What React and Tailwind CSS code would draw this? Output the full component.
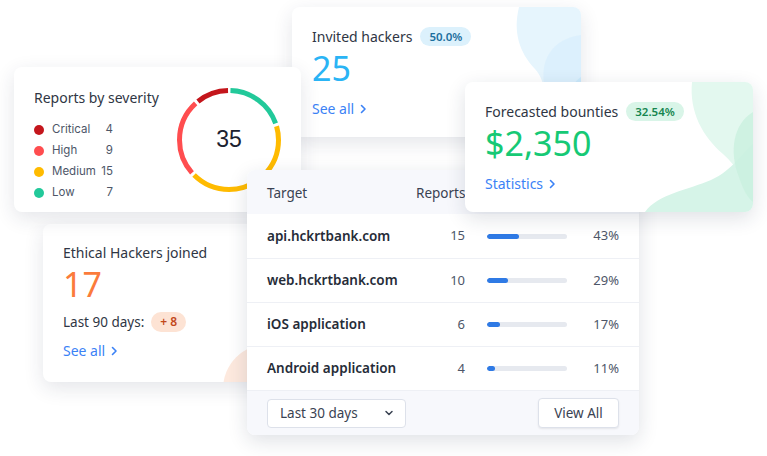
import React from "react";

const severity = [
  { label: "Critical", count: 4, color: "#c4161c" },
  { label: "High", count: 9, color: "#ff4d4f" },
  { label: "Medium", count: 15, color: "#ffbb00" },
  { label: "Low", count: 7, color: "#22c99a" },
];

const targets = [
  { name: "api.hckrtbank.com", reports: 15, pct: 43 },
  { name: "web.hckrtbank.com", reports: 10, pct: 29 },
  { name: "iOS application", reports: 6, pct: 17 },
  { name: "Android application", reports: 4, pct: 11 },
];

const Chevron = ({ className }) => (
  <svg viewBox="0 0 10 10" className={className} fill="none" stroke="currentColor" strokeWidth="1.6" strokeLinecap="round" strokeLinejoin="round">
    <path d="M3.5 1.5 7 5 3.5 8.5" />
  </svg>
);

const Donut = () => {
  const r = 49.5;
  const c = 2 * Math.PI * r;
  const gap = 3;
  // clockwise from the top: low, medium, high, critical
  const order = [severity[3], severity[2], severity[1], severity[0]];
  let start = 0;
  return (
    <div className="relative w-[106px] h-[106px]">
      <svg viewBox="0 0 106 106" className="w-full h-full -rotate-90">
        {order.map((s) => {
          const len = (s.count / 35) * c;
          const el = (
            <circle
              key={s.label}
              cx="53"
              cy="53"
              r={r}
              fill="none"
              stroke={s.color}
              strokeWidth="5"
              strokeDasharray={`${len - gap} ${c}`}
              strokeDashoffset={-(start + gap / 2)}
            />
          );
          start += len;
          return el;
        })}
      </svg>
      <div className="absolute inset-0 flex items-center justify-center text-[23px] text-[#1c2230] font-['Liberation_Sans',sans-serif]">
        35
      </div>
    </div>
  );
};

const App = () => {
  return (
    <div className="relative w-[767px] h-[456px] bg-white overflow-hidden font-['Noto_Sans',sans-serif]">
      {/* Invited hackers */}
      <div className="absolute left-[292px] top-[7px] z-10 w-[289px] h-[130px] rounded-lg bg-white shadow-[0_6px_20px_rgba(30,40,70,0.12)] overflow-hidden">
        <svg className="absolute right-0 top-0" width="70" height="130" viewBox="0 0 70 130">
          <path d="M8 0 C2 25 8 45 24 62 C36 75 34 95 40 130 L70 130 L70 0 Z" fill="#e6f5fd" />
          <path d="M70 28 C40 32 28 55 34 80 C38 100 50 115 70 120 Z" fill="#d9effc" opacity="0.8" />
          <path d="M70 70 C55 80 50 105 58 130 L70 130 Z" fill="#cbe9fb" />
        </svg>
        <div className="relative px-5 pt-[19px]">
          <div className="flex items-center gap-2">
            <span className="text-[14px] text-[#2f3644]">Invited hackers</span>
            <span className="rounded-full bg-[#dcf1fc] px-[9px] py-[1px] text-[11.5px] font-semibold text-[#1d6f9e]">50.0%</span>
          </div>
          <div className="mt-[1px] text-[34px] leading-[40px] text-[#2ab4f5]">25</div>
          <div className="mt-[10px] flex items-center gap-1 text-[14px] text-[#3b82f6]">
            See all <Chevron className="w-[10px] h-[10px]" />
          </div>
        </div>
      </div>

      {/* Ethical Hackers joined */}
      <div className="absolute left-[43px] top-[224px] z-10 w-[230px] h-[158px] rounded-lg bg-white shadow-[0_6px_20px_rgba(30,40,70,0.12)] overflow-hidden">
        <div className="absolute left-[180px] top-[120px] w-[90px] h-[90px] rounded-full bg-[#fde9de]" />
        <div className="relative px-5 pt-[18px]">
          <div className="text-[14px] text-[#2f3644]">Ethical Hackers joined</div>
          <div className="mt-[1px] text-[34px] leading-[40px] text-[#fb7b3b]">17</div>
          <div className="mt-[8px] flex items-center gap-[7px]">
            <span className="text-[13.5px] text-[#2f3644]">Last 90 days:</span>
            <span className="rounded-full bg-[#fde3d4] px-[9px] py-[1px] text-[12px] font-semibold text-[#c2481a]">+ 8</span>
          </div>
          <div className="mt-[8px] flex items-center gap-1 text-[14px] text-[#3b82f6]">
            See all <Chevron className="w-[10px] h-[10px]" />
          </div>
        </div>
      </div>

      {/* Reports by severity */}
      <div className="absolute left-[14px] top-[67px] z-20 w-[287px] h-[145px] rounded-lg bg-white shadow-[0_6px_20px_rgba(30,40,70,0.12)] flex items-center justify-between pl-5 pr-[19px]">
        <div className="pt-[8px]">
          <div className="text-[14px] text-[#2f3644]">Reports by severity</div>
          <div className="mt-[14px] flex flex-col gap-[5px] font-['Inter',sans-serif] text-[11.5px] text-[#4d5668]">
            {severity.map((s) => (
              <div key={s.label} className="flex items-center h-[16px]">
                <span className="w-[10px] h-[10px] rounded-full" style={{ backgroundColor: s.color }} />
                <span className="ml-[8px] w-[44px]">{s.label}</span>
                <span className="w-[17px] text-right">{s.count}</span>
              </div>
            ))}
          </div>
        </div>
        <Donut />
      </div>

      {/* Targets table */}
      <div className="absolute left-[247px] top-[170px] z-30 w-[392px] h-[265px] rounded-lg bg-white shadow-[0_6px_20px_rgba(30,40,70,0.14)] overflow-hidden flex flex-col">
        <div className="h-[44px] bg-[#f7f8fc] flex items-center px-5 pt-[2px] text-[13.5px] text-[#3a4252]">
          <span className="w-[149px]">Target</span>
          <span>Reports</span>
        </div>
        {targets.map((t, i) => (
          <div key={t.name} className={`h-[44px] flex items-center px-5 ${i > 0 ? "border-t border-[#eef0f5]" : ""}`}>
            <span className="w-[160px] text-[13.5px] font-semibold text-[#262c38]">{t.name}</span>
            <span className="w-[38px] text-right text-[13px] text-[#4d5668]">{t.reports}</span>
            <div className="ml-[22px] w-[80px] h-[5px] rounded-full bg-[#e6e9ef] overflow-hidden">
              <div className="h-full rounded-full bg-[#2f7ae5]" style={{ width: `${t.pct * 0.92}%` }} />
            </div>
            <span className="ml-auto text-[13px] text-[#4d5668]">{t.pct}%</span>
          </div>
        ))}
        <div className="flex-1 border-t border-[#eef0f5] bg-[#f7f8fc] flex items-center justify-between px-5">
          <div className="w-[139px] h-[29px] rounded border border-[#dde1ea] bg-white flex items-center justify-between pl-3 pr-[11px] text-[13.5px] text-[#3a4252]">
            Last 30 days
            <svg viewBox="0 0 10 10" className="w-[10px] h-[10px]" fill="none" stroke="currentColor" strokeWidth="1.5" strokeLinecap="round" strokeLinejoin="round">
              <path d="M2 3.5 5 6.5 8 3.5" />
            </svg>
          </div>
          <div className="w-[81px] h-[30px] rounded border border-[#dde1ea] bg-white shadow-[0_1px_2px_rgba(0,0,0,0.08)] flex items-center justify-center text-[13.5px] text-[#3a4252]">
            View All
          </div>
        </div>
      </div>

      {/* Forecasted bounties */}
      <div className="absolute left-[465px] top-[82px] z-40 w-[288px] h-[130px] rounded-lg bg-white shadow-[0_6px_20px_rgba(30,40,70,0.14)] overflow-hidden">
        <svg className="absolute right-0 top-0" width="160" height="130" viewBox="0 0 160 130">
          <path d="M99 0 C96 30 110 55 130 72 C145 85 150 100 160 110 L160 0 Z" fill="#e3f8ef" />
          <path d="M52 130 C65 112 95 108 118 98 C140 88 150 70 160 62 L160 130 Z" fill="#d6f4e8" />
          <path d="M160 30 C140 42 136 70 146 95 C150 108 155 116 160 120 Z" fill="#c9f0df" opacity="0.8" />
        </svg>
        <div className="relative px-5 pt-[19px]">
          <div className="flex items-center gap-2">
            <span className="text-[14px] text-[#2f3644]">Forecasted bounties</span>
            <span className="rounded-full bg-[#d9f5e8] px-[9px] py-[1px] text-[11.5px] font-semibold text-[#16864f]">32.54%</span>
          </div>
          <div className="mt-[1px] text-[34px] leading-[40px] text-[#16c975]">$2,350</div>
          <div className="mt-[10px] flex items-center gap-1 text-[14px] text-[#3b82f6]">
            Statistics <Chevron className="w-[10px] h-[10px]" />
          </div>
        </div>
      </div>
    </div>
  );
};

export default App;
